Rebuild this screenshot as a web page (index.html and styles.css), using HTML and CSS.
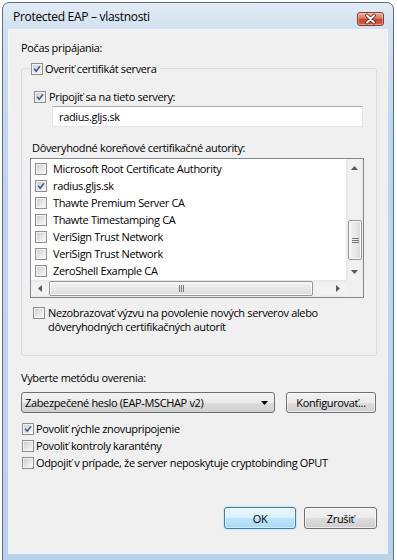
FILE: index.html
```html
<!DOCTYPE html>
<html lang="sk">

<head>
  <meta charset="UTF-8">
  <meta name="viewport" content="width=device-width, initial-scale=1.0">
  <title>Protected EAP – vlastnosti</title>
  <link rel="stylesheet" href="styles.css">
</head>

<body>
  <div class="window">
    <header class="titlebar">
      <span class="title">Protected EAP – vlastnosti</span>
      <span class="close-btn">
        <svg width="27" height="14" viewBox="0 0 27 14">
          <path d="M10 3.5 L17 10.5 M17 3.5 L10 10.5" stroke="#6b1f12" stroke-width="3.6" stroke-linecap="round" />
          <path d="M10 3.5 L17 10.5 M17 3.5 L10 10.5" stroke="#fff" stroke-width="2" stroke-linecap="round" />
        </svg>
      </span>
    </header>

    <div class="client">
      <div class="label">Počas pripájania:</div>

      <fieldset class="group">
        <legend class="check">
          <span class="box checked"><svg viewBox="0 0 12 12"><polyline points="2.6,5.8 5,8.6 9.6,2.6" /></svg></span>
          Overiť certifikát servera
        </legend>

        <div class="check servers">
          <span class="box checked"><svg viewBox="0 0 12 12"><polyline points="2.6,5.8 5,8.6 9.6,2.6" /></svg></span>
          Pripojiť sa na tieto servery:
        </div>
        <div class="textbox">radius.gljs.sk</div>

        <div class="label ca-label">Dôveryhodné koreňové certifikačné autority:</div>
        <div class="listbox">
          <div class="list-main">
            <ul class="list-items">
              <li class="check"><span class="box"></span>Microsoft Root Certificate Authority</li>
              <li class="check"><span class="box checked"><svg viewBox="0 0 12 12"><polyline points="2.6,5.8 5,8.6 9.6,2.6" /></svg></span>radius.gljs.sk</li>
              <li class="check"><span class="box"></span>Thawte Premium Server CA</li>
              <li class="check"><span class="box"></span>Thawte Timestamping CA</li>
              <li class="check"><span class="box"></span>VeriSign Trust Network</li>
              <li class="check"><span class="box"></span>VeriSign Trust Network</li>
              <li class="check"><span class="box"></span>ZeroShell Example CA</li>
            </ul>
            <div class="vscroll">
              <span class="sb-btn"><svg width="7" height="4" viewBox="0 0 7 4"><polygon points="0,4 3.5,0 7,4" /></svg></span>
              <div class="sb-track">
                <span class="thumb v-thumb">
                  <svg width="7" height="7" viewBox="0 0 7 7">
                    <path d="M0 1.5h7M0 3.5h7M0 5.5h7" stroke="#777" stroke-width="1" />
                  </svg>
                </span>
              </div>
              <span class="sb-btn"><svg width="7" height="4" viewBox="0 0 7 4"><polygon points="0,0 7,0 3.5,4" /></svg></span>
            </div>
          </div>
          <div class="hscroll-row">
            <div class="hscroll">
              <span class="sb-btn"><svg width="4" height="7" viewBox="0 0 4 7"><polygon points="4,0 4,7 0,3.5" /></svg></span>
              <div class="sb-track">
                <span class="thumb h-thumb">
                  <svg width="7" height="7" viewBox="0 0 7 7">
                    <path d="M1.5 0v7M3.5 0v7M5.5 0v7" stroke="#777" stroke-width="1" />
                  </svg>
                </span>
              </div>
              <span class="sb-btn"><svg width="4" height="7" viewBox="0 0 4 7"><polygon points="0,0 4,3.5 0,7" /></svg></span>
            </div>
            <span class="sb-corner"></span>
          </div>
        </div>

        <div class="check multi">
          <span class="box"></span>
          <span>Nezobrazovať výzvu na povolenie nových serverov alebo<br>dôveryhodných certifikačných autorít</span>
        </div>
      </fieldset>

      <div class="label method-label">Vyberte metódu overenia:</div>
      <div class="method-row">
        <div class="combo">
          <span>Zabezpečené heslo (EAP-MSCHAP v2)</span>
          <svg width="7" height="4" viewBox="0 0 7 4"><polygon points="0,0 7,0 3.5,4" /></svg>
        </div>
        <button class="btn config-btn">Konfigurovať...</button>
      </div>

      <div class="options">
        <div class="check"><span class="box checked"><svg viewBox="0 0 12 12"><polyline points="2.6,5.8 5,8.6 9.6,2.6" /></svg></span>Povoliť rýchle znovupripojenie</div>
        <div class="check"><span class="box"></span>Povoliť kontroly karantény</div>
        <div class="check"><span class="box"></span>Odpojiť v prípade, že server neposkytuje cryptobinding OPUT</div>
      </div>

      <div class="actions">
        <button class="btn default-btn">OK</button>
        <button class="btn cancel-btn">Zrušiť</button>
      </div>
    </div>
  </div>
</body>

</html>
```

FILE: styles.css
```css
html {
  box-sizing: border-box;
}

*,
*::before,
*::after {
  box-sizing: inherit;
}

body {
  margin: 0;
  overflow: hidden;
  background: #fff;
  color: #000;
  font-family: "Open Sans", "Noto Sans", sans-serif;
  font-size: 11px;
  letter-spacing: -0.35px;
}

/* window frame */
.window {
  display: flex;
  flex-direction: column;
  width: 392px;
  height: 580px;
  margin: 2px 0 0 2px;
  border: 1px solid #5d6d80;
  border-radius: 7px 7px 0 0;
  background: linear-gradient(#e2ecf6, #d0e0f0 28px, #c0d7ee 120px, #b9d2ec);
}

.titlebar {
  display: flex;
  justify-content: space-between;
  align-items: flex-start;
  height: 27px;
  padding: 0 9px 0 10px;
  flex-shrink: 0;
}

.title {
  margin-top: 6px;
  font-size: 12px;
  line-height: 16px;
  letter-spacing: -0.3px;
}

.close-btn {
  display: block;
  width: 27px;
  height: 14px;
  margin-top: 9px;
  border: 1px solid #8a3b2e;
  border-radius: 3px;
  background: linear-gradient(#eab0a2, #d9745f 45%, #c5432c 55%, #d2664c);
  box-shadow: inset 0 0 0 1px rgba(255 255 255 / 0.35);
}

.close-btn svg {
  display: block;
  margin: -1px;
}

/* client area */
.client {
  height: 523px;
  margin: 0 6px;
  padding: 10px 10px 0 12px;
  background: #f0f0f0;
  box-shadow: 0 0 0 1px rgba(255 255 255 / 0.7);
  flex-shrink: 0;
}

.label {
  line-height: 15px;
}

.check {
  display: flex;
  align-items: center;
  gap: 3px;
}

.box {
  display: block;
  width: 12px;
  height: 12px;
  flex-shrink: 0;
  border: 1px solid #8e8f8f;
  background: linear-gradient(135deg, #c6cacf, #e6e7e8 55%, #fbfbfb);
  box-shadow: inset 0 0 0 1px #f3f3f3;
}

.box svg {
  display: block;
  width: 10px;
  height: 10px;
}

.box svg polyline {
  fill: none;
  stroke: #3f5b96;
  stroke-width: 1.9;
}

/* group box */
.group {
  margin: 6px 0 0;
  padding: 0 0 21px;
  min-width: 0;
  border: 1px solid #d5dfe5;
  border-radius: 3px;
}

.group legend {
  margin-left: 8px;
  padding: 0 3px 0 1px;
  line-height: 15px;
  gap: 2px;
}

.servers {
  margin: 13px 0 0 12px;
  line-height: 15px;
}

.textbox {
  width: 311px;
  height: 21px;
  margin: 2px 0 0 30px;
  padding-left: 6px;
  border: 1px solid #e0e5ea;
  border-top-color: #abadb3;
  background: #fff;
  line-height: 19px;
}

.ca-label {
  margin: 13px 0 0 10px;
}

/* list with checkboxes */
.listbox {
  width: 334px;
  height: 140px;
  margin: 3px 0 0 8px;
  border: 1px solid #828790;
  background: #fff;
}

.list-main {
  display: flex;
  height: 121px;
}

.list-items {
  flex: 1;
  margin: 0;
  padding: 1px 0 0 4px;
  list-style: none;
  overflow: hidden;
}

.list-items li {
  height: 17px;
  gap: 6px;
}

.vscroll {
  display: flex;
  flex-direction: column;
  width: 17px;
  background: linear-gradient(to right, #e6e6e6, #f2f2f2 3px, #f2f2f2 14px, #e9e9e9);
}

.sb-btn {
  display: flex;
  align-items: center;
  justify-content: center;
  width: 17px;
  height: 17px;
  flex-shrink: 0;
}

.sb-btn svg {
  fill: #5b5b5b;
}

.vscroll .sb-track {
  flex: 1;
  padding: 44px 0 0 2px;
}

.thumb {
  display: flex;
  align-items: center;
  justify-content: center;
  border: 1px solid #979797;
  border-radius: 2px;
  box-shadow: inset 0 0 0 1px #fafafa;
}

.v-thumb {
  width: 14px;
  height: 40px;
  background: linear-gradient(to right, #f3f3f3, #e9e9e9 50%, #d9d9d9);
}

.hscroll-row {
  display: flex;
  height: 17px;
}

.hscroll {
  display: flex;
  flex: 1;
  background: linear-gradient(#e6e6e6, #f2f2f2 3px, #f2f2f2 14px, #e9e9e9);
}

.hscroll .sb-track {
  flex: 1;
  padding: 1px 0 0 1px;
}

.h-thumb {
  width: 264px;
  height: 15px;
  background: linear-gradient(#f3f3f3, #e9e9e9 50%, #d9d9d9);
}

.sb-corner {
  width: 17px;
  background: #f0f0f0;
}

.multi {
  align-items: flex-start;
  margin: 8px 0 0 11px;
  line-height: 14px;
}

.multi .box {
  margin-top: 1px;
}

/* authentication method */
.method-label {
  margin-top: 14px;
}

.method-row {
  display: flex;
  gap: 11px;
  margin-top: 7px;
}

.combo {
  display: flex;
  justify-content: space-between;
  align-items: center;
  width: 254px;
  height: 21px;
  padding: 0 6px 0 3px;
  border: 1px solid #707070;
  border-radius: 3px;
  background: linear-gradient(#f2f2f2, #ebebeb 50%, #dddddd 50%, #cfcfcf);
}

.combo svg {
  fill: #000;
}

.btn {
  height: 21px;
  padding: 0;
  border: 1px solid #707070;
  border-radius: 3px;
  background: linear-gradient(#f2f2f2, #ebebeb 50%, #dddddd 50%, #cfcfcf);
  box-shadow: inset 0 0 0 1px rgba(255 255 255 / 0.6);
  color: #000;
  font: inherit;
  letter-spacing: inherit;
}

.config-btn {
  width: 90px;
}

.options {
  margin-top: 7px;
}

.options .check {
  margin-left: 1px;
  line-height: 17px;
  gap: 2px;
}

.actions {
  display: flex;
  justify-content: flex-end;
  gap: 8px;
  margin-top: 36px;
}

.actions .btn {
  height: 22px;
}

.default-btn {
  width: 72px;
  border-color: #3c7fb1;
  background: linear-gradient(#eaf6fd, #d9f0fc 50%, #bee6fd 50%, #a7d9f5);
  box-shadow: inset 0 0 0 1px rgba(255 255 255 / 0.5), 0 0 2px #9ccbe9;
}

.cancel-btn {
  width: 73px;
}
```
